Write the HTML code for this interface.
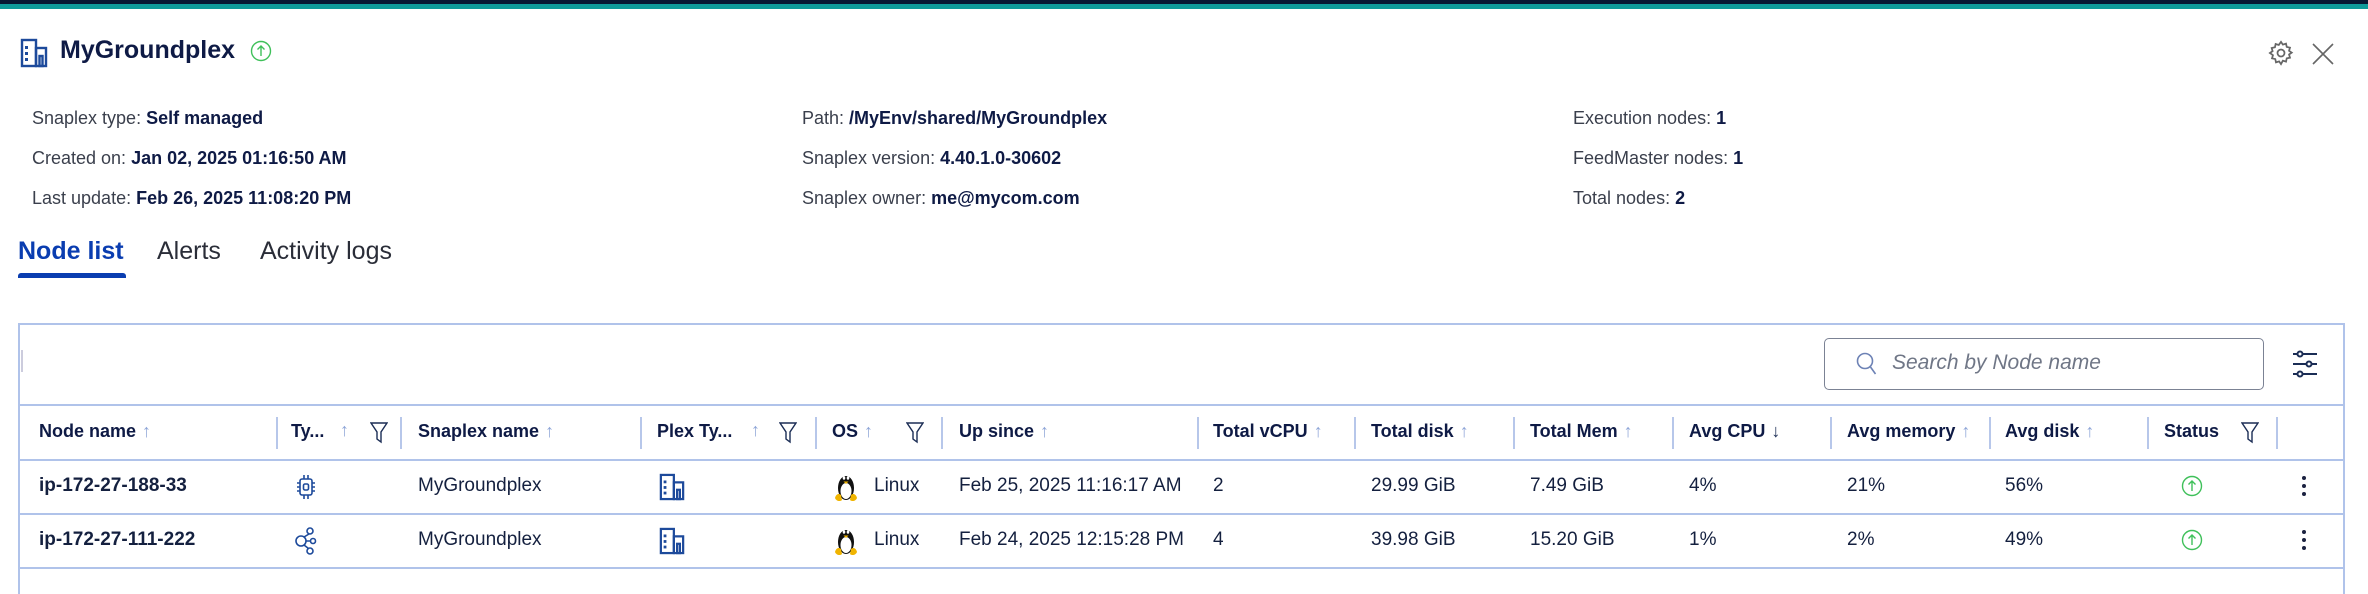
<!DOCTYPE html>
<html><head><meta charset="utf-8"><style>
*{margin:0;padding:0;box-sizing:border-box}
html,body{width:2368px;height:594px;overflow:hidden}
body{background:#fff;font-family:"Liberation Sans",sans-serif;color:#14203f;position:relative}
.a{position:absolute;white-space:nowrap}
.lbl{font-size:18px;color:#3a3f4c}
.lbl b{color:#0e1a45;font-weight:700}
.h{font-size:18px;font-weight:700;color:#0e1a45;top:421px}
.c{font-size:19px;color:#14203f}
.sep{position:absolute;top:417px;width:2px;height:32px;background:#b7c7ea}
.ar{color:#8fa6d8;font-size:18px;font-weight:400;margin-left:6px}
</style></head><body>
<svg width="0" height="0" style="position:absolute"><defs>
<symbol id="bld" viewBox="0 0 28 30"><g fill="none" stroke="#1d4a9b" stroke-width="2.4"><rect x="2" y="2" width="14" height="26"/><rect x="16" y="10" width="10" height="18"/><rect x="19.5" y="18" width="3" height="10"/></g><g fill="#1d4a9b"><rect x="5" y="8" width="3" height="3"/><rect x="5" y="14" width="3" height="3"/><rect x="5" y="20" width="3" height="3"/></g></symbol>
<symbol id="tux" viewBox="0 0 24 32"><ellipse cx="12" cy="17" rx="8" ry="12" fill="#111"/><ellipse cx="12" cy="20" rx="5.5" ry="8" fill="#fff"/><ellipse cx="10" cy="7" rx="1.3" ry="1.8" fill="#fff"/><ellipse cx="14" cy="7" rx="1.3" ry="1.8" fill="#fff"/><path d="M9.5 10.5h5l-2.5 2.5z" fill="#f0b400"/><path d="M1 27c1-4 4-5 6-3l1 5c-2 2-6 1-7-2z" fill="#f0b400"/><path d="M23 27c-1-4-4-5-6-3l-1 5c2 2 6 1 7-2z" fill="#f0b400"/></symbol>
<symbol id="flt" viewBox="0 0 18 22"><path d="M1 1h16l-6 9v10l-4-3V10z" fill="none" stroke="#1b2d55" stroke-width="1.4"/></symbol>
<symbol id="up" viewBox="0 0 22 22"><g fill="none" stroke="#3fc05a" stroke-width="1.4"><circle cx="11" cy="11" r="9.5"/><path d="M11 16V6M7.5 9.5L11 6l3.5 3.5"/></g></symbol>
</defs></svg>
<div class="a" style="left:0;top:0;width:2368px;height:4px;background:#071733"></div>
<div class="a" style="left:0;top:4px;width:2368px;height:5px;background:#0f9a9a"></div>

<svg class="a" style="left:20px;top:38px" width="28" height="30"><use href="#bld"/></svg>
<div class="a" style="left:60px;top:36px;font-size:25px;font-weight:700;color:#0e1a45">MyGroundplex</div>
<svg class="a" style="left:250px;top:40px" width="22" height="22"><use href="#up"/></svg>

<svg class="a" style="left:2267px;top:39px" width="28" height="28" viewBox="0 0 24 24" fill="none" stroke="#666" stroke-width="1.5"><circle cx="12" cy="12" r="3"/><path d="M12 2.5l1.6 2.3 2.7-.8.6 2.8 2.8.6-.8 2.7 2.3 1.6-2.3 1.6.8 2.7-2.8.6-.6 2.8-2.7-.8L12 21.5l-1.6-2.3-2.7.8-.6-2.8-2.8-.6.8-2.7L2.5 12l2.3-1.6-.8-2.7 2.8-.6.6-2.8 2.7.8z"/></svg>
<svg class="a" style="left:2311px;top:42px" width="24" height="24" viewBox="0 0 24 24" stroke="#666" stroke-width="1.6"><path d="M2 2L22 22M22 2L2 22"/></svg>

<div class="a lbl" style="left:32px;top:108px">Snaplex type: <b>Self managed</b></div>
<div class="a lbl" style="left:32px;top:148px">Created on: <b>Jan 02, 2025 01:16:50 AM</b></div>
<div class="a lbl" style="left:32px;top:188px">Last update: <b>Feb 26, 2025 11:08:20 PM</b></div>
<div class="a lbl" style="left:802px;top:108px">Path: <b>/MyEnv/shared/MyGroundplex</b></div>
<div class="a lbl" style="left:802px;top:148px">Snaplex version: <b>4.40.1.0-30602</b></div>
<div class="a lbl" style="left:802px;top:188px">Snaplex owner: <b>me@mycom.com</b></div>
<div class="a lbl" style="left:1573px;top:108px">Execution nodes: <b>1</b></div>
<div class="a lbl" style="left:1573px;top:148px">FeedMaster nodes: <b>1</b></div>
<div class="a lbl" style="left:1573px;top:188px">Total nodes: <b>2</b></div>

<div class="a" style="left:18px;top:237px;font-size:25px;font-weight:700;color:#0a3db0">Node list</div>
<div class="a" style="left:157px;top:237px;font-size:25px;color:#2a2d38">Alerts</div>
<div class="a" style="left:260px;top:237px;font-size:25px;color:#2a2d38">Activity logs</div>
<div class="a" style="left:18px;top:273px;width:108px;height:5px;background:#0a3db0;border-radius:3px 3px 0 0"></div>

<div class="a" style="left:18px;top:323px;width:2327px;height:271px;border:2px solid #b0c3ea;border-bottom:none"></div>
<div class="a" style="left:21px;top:350px;width:2px;height:22px;background:#ccd"></div>
<div class="a" style="left:1824px;top:338px;width:440px;height:52px;border:1.5px solid #7b8294;border-radius:5px"></div>
<svg class="a" style="left:1856px;top:352px" width="22" height="24" viewBox="0 0 22 24" fill="none" stroke="#6d82b5" stroke-width="1.6"><circle cx="9" cy="9" r="7.5"/><path d="M14.5 15l5 7"/></svg>
<div class="a" style="left:1892px;top:351px;font-size:21px;font-style:italic;color:#6f7686">Search by Node name</div>
<svg class="a" style="left:2292px;top:350px" width="26" height="28" viewBox="0 0 26 28" fill="none" stroke="#1b2d55" stroke-width="2"><path d="M1 4h24M1 14h24M1 24h24"/><circle cx="8" cy="4" r="2.5" fill="#fff"/><circle cx="17" cy="14" r="2.5" fill="#fff"/><circle cx="8" cy="24" r="2.5" fill="#fff"/></svg>

<div class="a" style="left:20px;top:404px;width:2325px;height:2px;background:#b0c3ea"></div>
<div class="a" style="left:20px;top:459px;width:2325px;height:2px;background:#b0c3ea"></div>
<div class="a" style="left:20px;top:513px;width:2325px;height:2px;background:#b0c3ea"></div>
<div class="a" style="left:20px;top:567px;width:2325px;height:2px;background:#b0c3ea"></div>

<div class="sep" style="left:276px"></div><div class="sep" style="left:400px"></div><div class="sep" style="left:640px"></div><div class="sep" style="left:815px"></div><div class="sep" style="left:941px"></div><div class="sep" style="left:1197px"></div><div class="sep" style="left:1354px"></div><div class="sep" style="left:1513px"></div><div class="sep" style="left:1672px"></div><div class="sep" style="left:1830px"></div><div class="sep" style="left:1989px"></div><div class="sep" style="left:2147px"></div><div class="sep" style="left:2276px"></div>

<div class="a h" style="left:39px">Node name<span class="ar">↑</span></div>
<div class="a h" style="left:291px">Ty...</div><div class="a ar" style="left:334px;top:420px">↑</div>
<div class="a h" style="left:418px">Snaplex name<span class="ar">↑</span></div>
<div class="a h" style="left:657px">Plex Ty...</div><div class="a ar" style="left:745px;top:420px">↑</div>
<div class="a h" style="left:832px">OS<span class="ar">↑</span></div>
<div class="a h" style="left:959px">Up since<span class="ar">↑</span></div>
<div class="a h" style="left:1213px">Total vCPU<span class="ar">↑</span></div>
<div class="a h" style="left:1371px">Total disk<span class="ar">↑</span></div>
<div class="a h" style="left:1530px">Total Mem<span class="ar">↑</span></div>
<div class="a h" style="left:1689px">Avg CPU<span class="ar" style="color:#1b2d55">↓</span></div>
<div class="a h" style="left:1847px">Avg memory<span class="ar">↑</span></div>
<div class="a h" style="left:2005px">Avg disk<span class="ar">↑</span></div>
<div class="a h" style="left:2164px">Status</div>
<svg class="a" style="left:370px;top:422px" width="18" height="22"><use href="#flt"/></svg>
<svg class="a" style="left:779px;top:422px" width="18" height="22"><use href="#flt"/></svg>
<svg class="a" style="left:906px;top:422px" width="18" height="22"><use href="#flt"/></svg>
<svg class="a" style="left:2241px;top:422px" width="18" height="22"><use href="#flt"/></svg>

<div class="a c" style="left:39px;top:475px;font-weight:700">ip-172-27-188-33</div>
<svg class="a" style="left:296px;top:474px" width="20" height="26" viewBox="0 0 20 26" fill="none" stroke="#1d4a9b" stroke-width="1.6"><rect x="4" y="5" width="12" height="16" rx="2"/><rect x="7.5" y="10" width="5" height="6" rx="1.5"/><path d="M8 1v4M12 1v4M8 21v4M12 21v4M1 9h3M1 13h3M1 17h3M16 9h3M16 13h3M16 17h3"/></svg>
<div class="a c" style="left:418px;top:475px">MyGroundplex</div>
<svg class="a" style="left:659px;top:473px" width="26" height="28"><use href="#bld"/></svg>
<svg class="a" style="left:834px;top:471px" width="24" height="32"><use href="#tux"/></svg>
<div class="a c" style="left:874px;top:475px">Linux</div>
<div class="a c" style="left:959px;top:475px">Feb 25, 2025 11:16:17 AM</div>
<div class="a c" style="left:1213px;top:475px">2</div>
<div class="a c" style="left:1371px;top:475px">29.99 GiB</div>
<div class="a c" style="left:1530px;top:475px">7.49 GiB</div>
<div class="a c" style="left:1689px;top:475px">4%</div>
<div class="a c" style="left:1847px;top:475px">21%</div>
<div class="a c" style="left:2005px;top:475px">56%</div>
<svg class="a" style="left:2181px;top:475px" width="22" height="22"><use href="#up"/></svg>
<svg class="a" style="left:2301px;top:475px" width="6" height="22"><circle cx="3" cy="3" r="2" fill="#1b2240"/><circle cx="3" cy="11" r="2" fill="#1b2240"/><circle cx="3" cy="19" r="2" fill="#1b2240"/></svg>

<div class="a c" style="left:39px;top:529px;font-weight:700">ip-172-27-111-222</div>
<svg class="a" style="left:294px;top:527px" width="24" height="28" viewBox="0 0 24 28" fill="none" stroke="#1d4a9b" stroke-width="1.6"><circle cx="16" cy="4" r="3"/><circle cx="7" cy="14" r="5"/><circle cx="19" cy="14" r="2.5"/><circle cx="16" cy="24" r="3"/><path d="M15 7l-5 3M12 14h4.5M10 18l4.5 3.5"/></svg>
<div class="a c" style="left:418px;top:529px">MyGroundplex</div>
<svg class="a" style="left:659px;top:527px" width="26" height="28"><use href="#bld"/></svg>
<svg class="a" style="left:834px;top:525px" width="24" height="32"><use href="#tux"/></svg>
<div class="a c" style="left:874px;top:529px">Linux</div>
<div class="a c" style="left:959px;top:529px">Feb 24, 2025 12:15:28 PM</div>
<div class="a c" style="left:1213px;top:529px">4</div>
<div class="a c" style="left:1371px;top:529px">39.98 GiB</div>
<div class="a c" style="left:1530px;top:529px">15.20 GiB</div>
<div class="a c" style="left:1689px;top:529px">1%</div>
<div class="a c" style="left:1847px;top:529px">2%</div>
<div class="a c" style="left:2005px;top:529px">49%</div>
<svg class="a" style="left:2181px;top:529px" width="22" height="22"><use href="#up"/></svg>
<svg class="a" style="left:2301px;top:529px" width="6" height="22"><circle cx="3" cy="3" r="2" fill="#1b2240"/><circle cx="3" cy="11" r="2" fill="#1b2240"/><circle cx="3" cy="19" r="2" fill="#1b2240"/></svg>
</body></html>
